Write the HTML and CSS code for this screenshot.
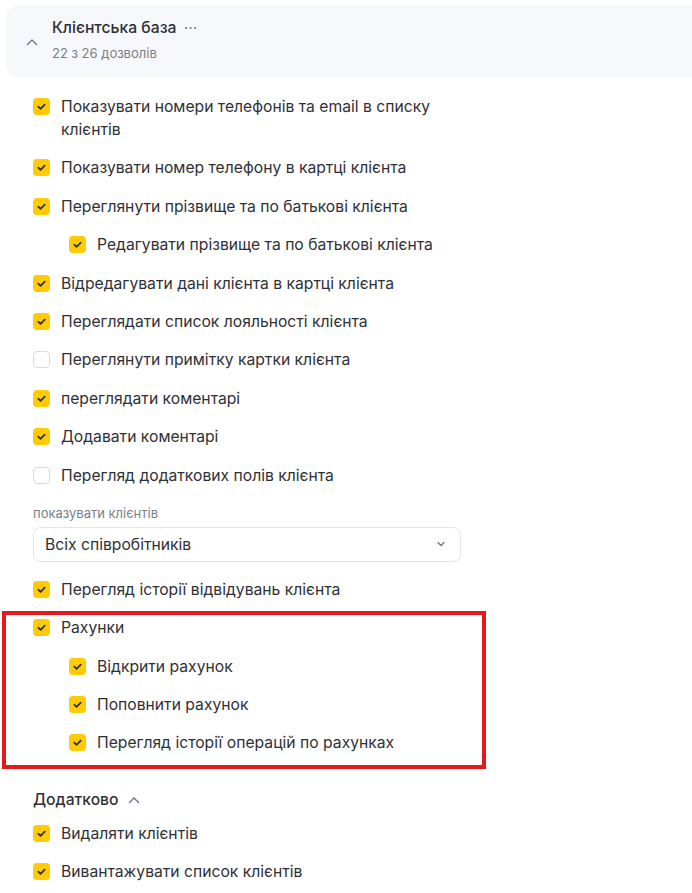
FILE: index.html
```html
<!DOCTYPE html>
<html lang="uk">
<head>
  <meta charset="UTF-8" />
  <meta name="viewport" content="width=device-width, initial-scale=1.0" />
  <title>Клієнтська база</title>
  <link rel="stylesheet" href="styles.css">
</head>
<body>

  <div class="section-head">
    <svg class="chevron" width="12" height="8" viewBox="0 0 12 8"><path d="M1.5 6.5 L6 2 L10.5 6.5" fill="none" stroke="#6b7280" stroke-width="1.4" stroke-linecap="round" stroke-linejoin="round"/></svg>
    <div>
      <div class="section-title">Клієнтська база <span class="dots">···</span></div>
      <div class="section-sub">22 з 26 дозволів</div>
    </div>
  </div>

  <div class="list">
    <label class="item"><span class="box on"></span><span>Показувати номери телефонів та email в списку клієнтів</span></label>
    <label class="item"><span class="box on"></span><span>Показувати номер телефону в картці клієнта</span></label>
    <label class="item"><span class="box on"></span><span>Переглянути прізвище та по батькові клієнта</span></label>
    <label class="item sub"><span class="box on"></span><span>Редагувати прізвище та по батькові клієнта</span></label>
    <label class="item"><span class="box on"></span><span>Відредагувати дані клієнта в картці клієнта</span></label>
    <label class="item"><span class="box on"></span><span>Переглядати список лояльності клієнта</span></label>
    <label class="item"><span class="box"></span><span>Переглянути примітку картки клієнта</span></label>
    <label class="item"><span class="box on"></span><span>переглядати коментарі</span></label>
    <label class="item"><span class="box on"></span><span>Додавати коментарі</span></label>
    <label class="item"><span class="box"></span><span>Перегляд додаткових полів клієнта</span></label>

    <div class="field">
      <div class="field-label">показувати клієнтів</div>
      <div class="select">
        <span>Всіх співробітників</span>
        <svg width="10" height="6" viewBox="0 0 10 6"><path d="M2 1.5 L5 4.5 L8 1.5" fill="none" stroke="#6b7280" stroke-width="1.2" stroke-linecap="round" stroke-linejoin="round"/></svg>
      </div>
    </div>

    <label class="item"><span class="box on"></span><span>Перегляд історії відвідувань клієнта</span></label>

    <div class="group marked">
      <label class="item"><span class="box on"></span><span>Рахунки</span></label>
      <label class="item sub"><span class="box on"></span><span>Відкрити рахунок</span></label>
      <label class="item sub"><span class="box on"></span><span>Поповнити рахунок</span></label>
      <label class="item sub"><span class="box on"></span><span>Перегляд історії операцій по рахунках</span></label>
    </div>

    <div class="extra-head">Додатково
      <svg width="12" height="8" viewBox="0 0 12 8"><path d="M1.5 6.5 L6 2 L10.5 6.5" fill="none" stroke="#6b7280" stroke-width="1.4" stroke-linecap="round" stroke-linejoin="round"/></svg>
    </div>
    <label class="item"><span class="box on"></span><span>Видаляти клієнтів</span></label>
    <label class="item"><span class="box on"></span><span>Вивантажувати список клієнтів</span></label>
  </div>

</body>
</html>
```

FILE: styles.css
```css
body {
  font-family: 'Inter', 'Noto Sans', sans-serif;
  background: #fff;
  margin: 0;
  color: #2f3037;
  font-size: 15.7px;
}
.section-head {
  display: flex;
  align-items: flex-start;
  margin: 5px 0 0 6px;
  height: 72px;
  box-sizing: border-box;
  padding-top: 12px;
  background: #f7f8fb;
  border-radius: 12px 0 0 12px;
}
.section-head .chevron {
  align-self: center;
  margin: -10px 14px 0 20px;
}
.section-title {
  font-weight: 500;
  line-height: 22px;
}
.dots {
  color: #7b7f88;
  font-weight: 400;
  margin-left: 3px;
}
.section-sub {
  font-size: 13px;
  line-height: 16px;
  color: #7b7f88;
  margin-top: 6px;
}
.list {
  padding: 18px 0 0 33px;
}
.item {
  display: flex;
  align-items: flex-start;
  gap: 11px;
  line-height: 23px;
  width: 410px;
  padding: 0 0 15.4px;
}
.item.sub {
  padding-left: 36px;
}
.box {
  flex: none;
  width: 17px;
  height: 17px;
  margin-top: 3px;
  box-sizing: border-box;
  border: 1px solid #d7dae0;
  border-radius: 4px;
  background: #fff;
}
.box.on {
  border: none;
  background: #ffcb05 url("data:image/svg+xml,%3Csvg xmlns='http://www.w3.org/2000/svg' width='17' height='17'%3E%3Cpath d='M5.3 8.7 L7.6 10.9 L11.7 6.6' fill='none' stroke='%23333' stroke-width='1.8' stroke-linecap='round' stroke-linejoin='round'/%3E%3C/svg%3E") center no-repeat;
}
.field {
  margin: 3px 0 16px;
}
.field-label {
  font-size: 13px;
  color: #7b7f88;
  margin-bottom: 6px;
}
.select {
  display: flex;
  align-items: center;
  justify-content: space-between;
  width: 428px;
  height: 35px;
  box-sizing: border-box;
  padding: 0 14px 0 11px;
  border: 1px solid #e3e5ea;
  border-radius: 8px;
}
.group {
  position: relative;
}
.group.marked::before {
  content: "";
  position: absolute;
  left: -31px;
  top: -5px;
  width: 484px;
  height: 158px;
  box-sizing: border-box;
  border: 4.5px solid #e3191c;
}
.extra-head {
  display: flex;
  align-items: center;
  gap: 9px;
  font-weight: 500;
  line-height: 24px;
  margin: 18px 0 10px;
}
```
